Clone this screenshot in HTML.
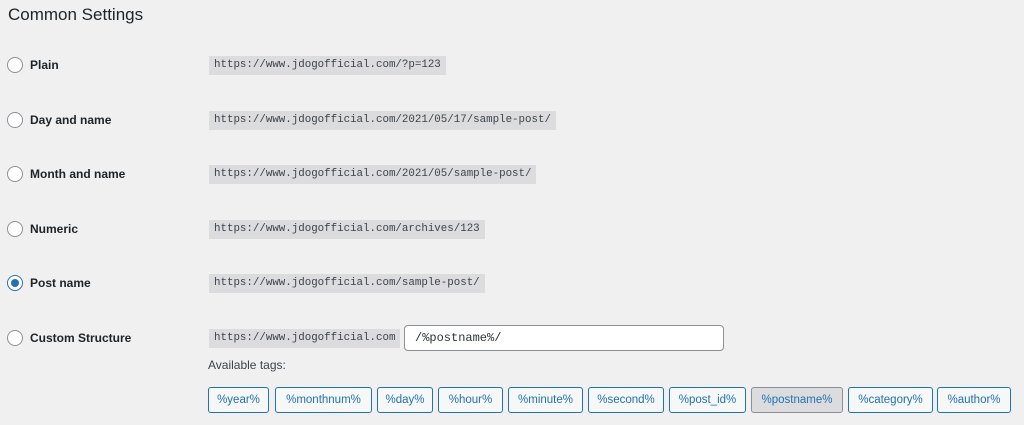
<!DOCTYPE html>
<html><head><style>
body{margin:0;width:1024px;height:425px;background:#f0f0f1;font-family:"Liberation Sans",sans-serif;color:#1d2327;position:relative;overflow:hidden}
h2{position:absolute;left:8px;top:5px;margin:0;font-size:17px;font-weight:normal;color:#1d2327}
.r{position:absolute;left:7px;width:14px;height:14px;border:1px solid #8c8f94;border-radius:50%;background:#fff}
.r.on{border-color:#2271b1}
.r.on::after{content:"";position:absolute;left:3px;top:3px;width:8px;height:8px;border-radius:50%;background:#2271b1}
.l{position:absolute;left:30px;font-size:12px;font-weight:bold;color:#1d2327}
code{position:absolute;left:209px;font-family:"Liberation Mono",monospace;font-size:10.8px;background:#dcdcde;padding:2px 5px;color:#3c434a;height:15px;line-height:15px}
.in{position:absolute;left:404px;top:325px;width:320px;height:26px;border:1px solid #8c8f94;border-radius:4px;background:#fff;font-family:"Liberation Mono",monospace;font-size:12px;line-height:24px;padding-left:10px;box-sizing:border-box;color:#2c3338}
.av{position:absolute;left:208px;top:358px;font-size:12px;color:#3c434a}
.b{position:absolute;top:387px;height:26px;box-sizing:border-box;border:1px solid #2271b1;border-radius:3px;background:#f6f7f7;color:#2271b1;font-size:11.5px;line-height:24px;text-align:center}
.b.p{background:#dcdcde;border-color:#8c8f94;color:#2271b1}
</style></head><body>
<h2>Common Settings</h2>
<div class="r" style="top:57px"></div><div class="l" style="top:58px">Plain</div><code style="top:56px">https://www.jdogofficial.com/?p=123</code>
<div class="r" style="top:112px"></div><div class="l" style="top:113px">Day and name</div><code style="top:111px">https://www.jdogofficial.com/2021/05/17/sample-post/</code>
<div class="r" style="top:166px"></div><div class="l" style="top:167px">Month and name</div><code style="top:165px">https://www.jdogofficial.com/2021/05/sample-post/</code>
<div class="r" style="top:221px"></div><div class="l" style="top:222px">Numeric</div><code style="top:220px">https://www.jdogofficial.com/archives/123</code>
<div class="r on" style="top:275px"></div><div class="l" style="top:276px">Post name</div><code style="top:274px">https://www.jdogofficial.com/sample-post/</code>
<div class="r" style="top:330px"></div><div class="l" style="top:331px">Custom Structure</div><code style="top:329px">https://www.jdogofficial.com</code>
<div class="in">/%postname%/</div>
<div class="av">Available tags:</div>
<div class="b" style="left:208px;width:61px">%year%</div>
<div class="b" style="left:275px;width:97px">%monthnum%</div>
<div class="b" style="left:377px;width:56px">%day%</div>
<div class="b" style="left:438px;width:65px">%hour%</div>
<div class="b" style="left:508px;width:75px">%minute%</div>
<div class="b" style="left:588px;width:76px">%second%</div>
<div class="b" style="left:669px;width:77px">%post_id%</div>
<div class="b p" style="left:751px;width:92px">%postname%</div>
<div class="b" style="left:848px;width:85px">%category%</div>
<div class="b" style="left:937px;width:74px">%author%</div>
</body></html>
